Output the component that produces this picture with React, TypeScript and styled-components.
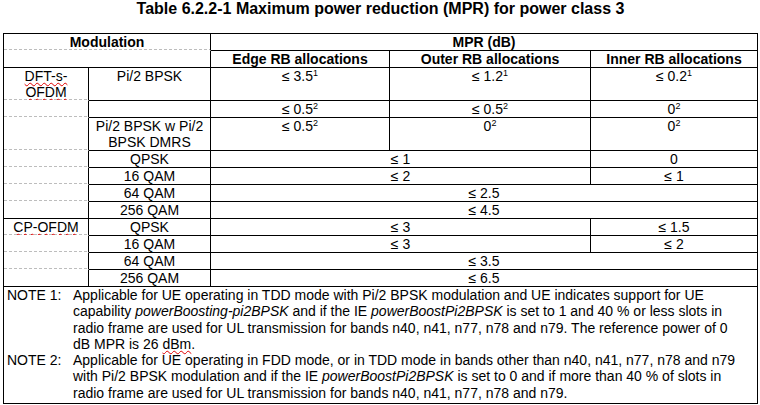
import React from "react";
import styled, { createGlobalStyle } from "styled-components";

const GlobalStyle = createGlobalStyle`
  html, body {
    margin: 0;
    padding: 0;
    background: #fff;
  }
  body {
    font-family: "Liberation Sans", Arial, sans-serif;
    color: #000;
  }
`;

const Page = styled.div`
  width: 760px;
  height: 405px;
  padding: 0 3px;
  box-sizing: border-box;
  overflow: hidden;
`;

const Title = styled.h1`
  margin: 0;
  width: 755px;
  height: 33px;
  font-size: 16px;
  line-height: 18px;
  font-weight: bold;
  text-align: center;
`;

const Table = styled.table`
  width: 755px;
  table-layout: fixed;
  border-collapse: separate;
  border-spacing: 0;
  border-top: 1px solid #000;
  border-left: 1px solid #000;
  font-size: 14px;
  line-height: 16px;
`;

// merged cells in the original keep a light dotted guide line between rows
const dashLine =
  "repeating-linear-gradient(to right, #bdbdbd 0 3px, transparent 3px 5px) left bottom / 100% 1px no-repeat";

const Cell = styled.td<{ $head?: boolean; $dashed?: boolean }>`
  box-sizing: border-box;
  padding: 0 2px;
  border-right: 1px solid #000;
  border-bottom: 1px solid ${(p) => (p.$dashed ? "transparent" : "#000")};
  background: ${(p) => (p.$dashed ? dashLine : "none")};
  text-align: center;
  vertical-align: top;
  font-weight: ${(p) => (p.$head ? "bold" : "normal")};
  white-space: nowrap;
  overflow: hidden;
`;

const NoteCell = styled.td`
  box-sizing: border-box;
  padding: 0 0 2px 3px;
  border-right: 1px solid #000;
  border-bottom: 1px solid #000;
  text-align: left;
  white-space: nowrap;
  line-height: 16.3px;
`;

const Note = styled.div`
  display: flex;
`;

const NoteLabel = styled.span`
  flex: 0 0 66px;
`;

const NoteText = styled.span`
  flex: 1;
`;

const Squiggle = styled.span`
  text-decoration: underline wavy #e00000;
  text-decoration-thickness: 1px;
  text-underline-offset: 1px;
  text-decoration-skip-ink: none;
`;

const Sup = styled.sup`
  font-size: 9px;
  line-height: 0;
  vertical-align: 5px;
`;

function App() {
  return (
    <Page>
      <GlobalStyle />
      <Title>Table 6.2.2-1 Maximum power reduction (MPR) for power class 3</Title>
      <Table>
        <colgroup>
          <col style={{ width: 85 }} />
          <col style={{ width: 122 }} />
          <col style={{ width: 179 }} />
          <col style={{ width: 201 }} />
          <col style={{ width: 167 }} />
        </colgroup>
        <tbody>
          <tr>
            <Cell $head $dashed colSpan={2}>Modulation</Cell>
            <Cell $head colSpan={3}>MPR (dB)</Cell>
          </tr>
          <tr>
            <Cell colSpan={2} />
            <Cell $head>Edge RB allocations</Cell>
            <Cell $head>Outer RB allocations</Cell>
            <Cell $head>Inner RB allocations</Cell>
          </tr>

          <tr>
            <Cell $dashed>
              <Squiggle>DFT-s-</Squiggle>
              <br />
              <Squiggle>OFDM</Squiggle>
            </Cell>
            <Cell>Pi/2 BPSK</Cell>
            <Cell>≤ 3.5<Sup>1</Sup></Cell>
            <Cell>≤ 1.2<Sup>1</Sup></Cell>
            <Cell>≤ 0.2<Sup>1</Sup></Cell>
          </tr>
          <tr>
            <Cell $dashed />
            <Cell />
            <Cell>≤ 0.5<Sup>2</Sup></Cell>
            <Cell>≤ 0.5<Sup>2</Sup></Cell>
            <Cell>0<Sup>2</Sup></Cell>
          </tr>
          <tr>
            <Cell $dashed />
            <Cell>
              Pi/2 BPSK w Pi/2
              <br />
              BPSK DMRS
            </Cell>
            <Cell>≤ 0.5<Sup>2</Sup></Cell>
            <Cell>0<Sup>2</Sup></Cell>
            <Cell>0<Sup>2</Sup></Cell>
          </tr>
          <tr>
            <Cell $dashed />
            <Cell>QPSK</Cell>
            <Cell colSpan={2}>≤ 1</Cell>
            <Cell>0</Cell>
          </tr>
          <tr>
            <Cell $dashed />
            <Cell>16 QAM</Cell>
            <Cell colSpan={2}>≤ 2</Cell>
            <Cell>≤ 1</Cell>
          </tr>
          <tr>
            <Cell $dashed />
            <Cell>64 QAM</Cell>
            <Cell colSpan={3}>≤ 2.5</Cell>
          </tr>
          <tr>
            <Cell />
            <Cell>256 QAM</Cell>
            <Cell colSpan={3}>≤ 4.5</Cell>
          </tr>

          <tr>
            <Cell $dashed>
              <Squiggle>CP-OFDM</Squiggle>
            </Cell>
            <Cell>QPSK</Cell>
            <Cell colSpan={2}>≤ 3</Cell>
            <Cell>≤ 1.5</Cell>
          </tr>
          <tr>
            <Cell $dashed />
            <Cell>16 QAM</Cell>
            <Cell colSpan={2}>≤ 3</Cell>
            <Cell>≤ 2</Cell>
          </tr>
          <tr>
            <Cell $dashed />
            <Cell>64 QAM</Cell>
            <Cell colSpan={3}>≤ 3.5</Cell>
          </tr>
          <tr>
            <Cell />
            <Cell>256 QAM</Cell>
            <Cell colSpan={3}>≤ 6.5</Cell>
          </tr>

          <tr>
            <NoteCell colSpan={5}>
              <Note>
                <NoteLabel>NOTE 1:</NoteLabel>
                <NoteText>
                  Applicable for UE operating in TDD mode with Pi/2 BPSK modulation and UE indicates support for UE
                  <br />
                  capability <i>powerBoosting-pi2BPSK</i> and if the IE <i>powerBoostPi2BPSK</i> is set to 1 and 40 % or less slots in
                  <br />
                  radio frame are used for UL transmission for bands n40, n41, n77, n78 and n79. The reference power of 0
                  <br />
                  dB MPR is 26 <Squiggle>dBm</Squiggle>.
                </NoteText>
              </Note>
              <Note>
                <NoteLabel>NOTE 2:</NoteLabel>
                <NoteText>
                  Applicable for UE operating in FDD mode, or in TDD mode in bands other than n40, n41, n77, n78 and n79
                  <br />
                  with Pi/2 BPSK modulation and if the IE <i>powerBoostPi2BPSK</i> is set to 0 and if more than 40 % of slots in
                  <br />
                  radio frame are used for UL transmission for bands n40, n41, n77, n78 and n79.
                </NoteText>
              </Note>
            </NoteCell>
          </tr>
        </tbody>
      </Table>
    </Page>
  );
}

export default App;
